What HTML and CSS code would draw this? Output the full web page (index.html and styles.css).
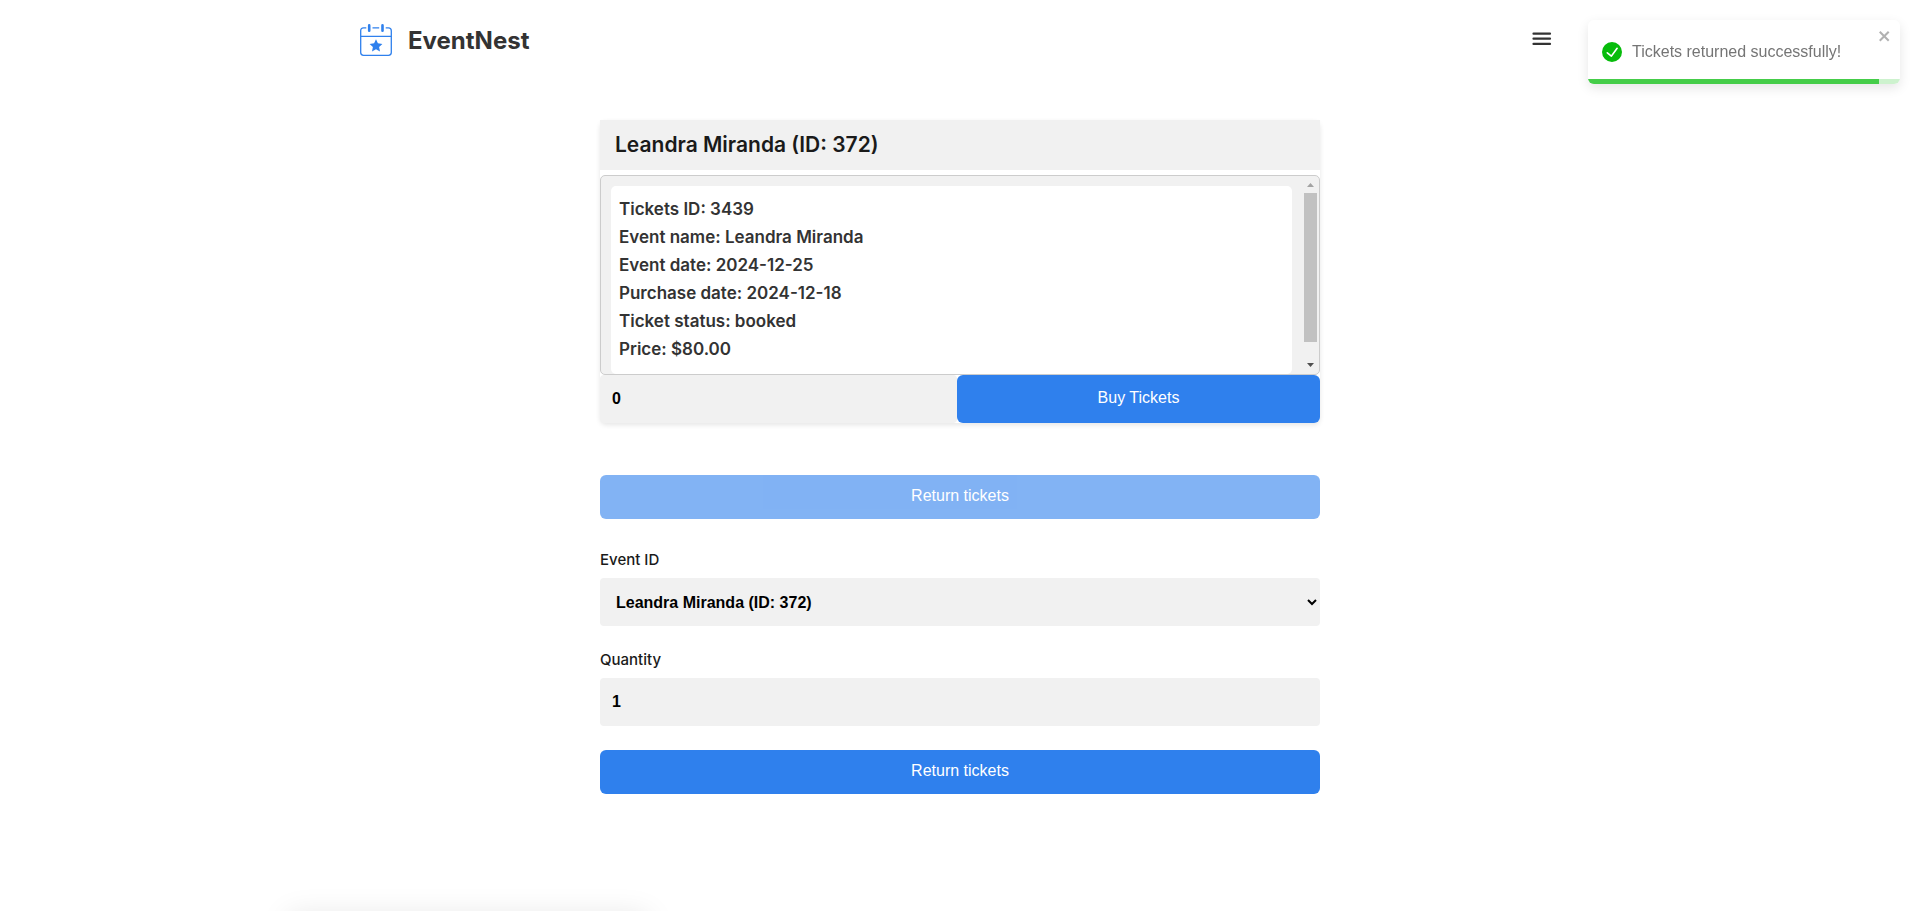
FILE: index.html
```html
<!DOCTYPE html>
<html lang="en">
<head>
<meta charset="utf-8">
<meta name="viewport" content="width=device-width, initial-scale=1">
<title>EventNest</title>
<link rel="stylesheet" href="styles.css">
</head>
<body>
<header class="header">
  <a class="brand" href="#">
    <svg class="brand-icon" viewBox="0 0 32 32" fill="none" stroke="#2f80ed" aria-hidden="true">
      <path d="M6.300 3.900H3.500Q.7 3.900.7 6.700V28.500Q.7 31.300 3.500 31.300H28.500Q31.300 31.300 31.300 28.500V6.700Q31.300 3.900 28.500 3.900H25.700M12.500 3.900H19.200M1 12.400H31" stroke-width="1.300"/>
      <path d="M9.200 1.400V6.700M22.500 1.400V6.700" stroke-width="2.600" stroke-linecap="round"/>
      <path d="M16 15.300l1.900 4 4.500.6-3.300 3 .9 4.500-4-2.200-4 2.200.9-4.500-3.300-3 4.500-.6z" fill="#2f80ed" stroke="none"/>
    </svg>
    <span class="brand-name">EventNest</span>
  </a>
  <button class="menu-button" type="button" aria-label="Menu">
    <svg class="menu-icon" viewBox="0 0 20 16" stroke="#333" stroke-width="2.200" stroke-linecap="round" aria-hidden="true">
      <path d="M1.500 1.700h16.500M1.500 6.700h16.500M1.500 11.900h16.500"/>
    </svg>
  </button>
</header>

<main class="main">
  <section class="card">
    <h2 class="card-title">Leandra Miranda (ID: 372)</h2>
    <div class="ticket-panel">
      <div class="ticket-list">
        <div class="ticket">
          <p>Tickets ID: 3439</p>
          <p>Event name: Leandra Miranda</p>
          <p>Event date: 2024-12-25</p>
          <p>Purchase date: 2024-12-18</p>
          <p>Ticket status: booked</p>
          <p>Price: $80.00</p>
        </div>
      </div>
      <div class="scrollbar" aria-hidden="true">
        <svg class="scrollbar-arrow" viewBox="0 0 17 17" fill="#a3a3a3"><path d="M5 11h7L8.500 7z"/></svg>
        <div class="scrollbar-track"><div class="scrollbar-thumb" style="height: 91%"></div></div>
        <svg class="scrollbar-arrow" viewBox="0 0 17 17" fill="#505050"><path d="M5 6h7l-3.500 4z"/></svg>
      </div>
    </div>
    <form class="buy-row">
      <input class="field" type="text" inputmode="numeric" value="0" aria-label="Number of tickets">
      <button class="button" type="button">Buy Tickets</button>
    </form>
  </section>

  <button class="button button-muted" type="button">Return tickets</button>

  <form class="return-form">
    <div class="form-group">
      <label class="label" for="event">Event ID</label>
      <select class="field" id="event">
        <option>Leandra Miranda (ID: 372)</option>
      </select>
    </div>
    <div class="form-group">
      <label class="label" for="quantity">Quantity</label>
      <input class="field" id="quantity" type="text" inputmode="numeric" value="1">
    </div>
    <button class="button" type="button">Return tickets</button>
  </form>
</main>

<div class="toast" role="alert">
  <svg class="toast-icon" viewBox="0 0 24 24" fill="#07bc0c" aria-hidden="true">
    <path d="M12 0a12 12 0 1012 12A12.014 12.014 0 0012 0zm6.927 8.200l-6.845 9.289a1.011 1.011 0 01-1.430.188l-4.888-3.908a1 1 0 111.250-1.562l4.076 3.261 6.227-8.451a1 1 0 111.610 1.183z"/>
  </svg>
  <span class="toast-text">Tickets returned successfully!</span>
  <button class="toast-close" type="button" aria-label="Close">
    <svg viewBox="0 0 14 16" aria-hidden="true">
      <path fill-rule="evenodd" d="M7.710 8.230l3.750 3.750-1.480 1.480-3.750-3.750-3.750 3.750L1 11.980l3.750-3.750L1 4.480 2.480 3l3.750 3.750L9.980 3l1.480 1.480-3.750 3.750z"/>
    </svg>
  </button>
  <div class="toast-progress"><div class="toast-progress-bar" style="width: 93.3%"></div></div>
</div>

<div class="drawer"></div>
</body>
</html>
```
FILE: styles.css
```css
* {
  box-sizing: border-box;
}

body {
  margin: 0;
  background: #fff;
  color: #1a1a1a;
  font-family: Inter, sans-serif;
}

button,
input,
select {
  font-family: "Liberation Sans", Arial, sans-serif;
}

.header {
  display: flex;
  align-items: center;
  justify-content: space-between;
  max-width: 1200px;
  height: 80px;
  margin: 0 auto;
}

.brand {
  display: flex;
  align-items: center;
  gap: 16px;
  color: #333;
  text-decoration: none;
}

.brand-icon {
  width: 32px;
  height: 32px;
}

.brand-name {
  font-size: 24px;
  font-weight: 700;
}

.menu-button {
  display: flex;
  padding: 8px;
  border: 0;
  background: none;
  cursor: pointer;
}

.menu-icon {
  width: 20px;
  height: 16px;
}

.main {
  max-width: 720px;
  margin: 40px auto;
}

.card {
  margin-bottom: 52px;
  border-radius: 6px;
  box-shadow: 0 2px 5px rgba(0, 0, 0, 0.1);
}

.card-title {
  margin: 0 0 5px;
  padding: 10px 15px;
  background: #f1f1f1;
  font-size: 21px;
  font-weight: 600;
  line-height: 30px;
}

.ticket-panel {
  display: flex;
  height: 200px;
  overflow: hidden;
  border: 1px solid #ccc;
  border-radius: 5px;
  background: #f1f1f1;
}

.ticket-list {
  flex: 1;
  padding: 10px;
  overflow-y: auto;
  scrollbar-width: none;
}

.scrollbar {
  display: flex;
  flex-direction: column;
  width: 17px;
}

.scrollbar-arrow {
  width: 17px;
  height: 17px;
}

.scrollbar-track {
  flex: 1;
  padding: 0 2px;
}

.scrollbar-thumb {
  background: #c1c1c1;
}

.ticket {
  margin-bottom: 10px;
  padding: 9px 8px 11px;
  border-radius: 5px;
  background: #fff;
  color: #333;
  font-size: 17px;
  font-weight: 600;
  line-height: 28px;
}

.ticket p {
  margin: 0;
}

.buy-row {
  display: grid;
  grid-template-columns: 357fr 363fr;
}

.field {
  width: 100%;
  height: 48px;
  padding: 0 12px;
  border: 0;
  border-radius: 4px;
  background: #f1f1f1;
  color: #000;
  font-size: 16px;
  font-weight: 700;
}

.button {
  width: 100%;
  min-height: 44px;
  padding: 0 12px 2px;
  border: 0;
  border-radius: 6px;
  background: #2f80ed;
  color: #fff;
  font-size: 16px;
  cursor: pointer;
}

.button-muted {
  opacity: 0.6;
}

.return-form {
  display: grid;
  gap: 24px;
  margin-top: 31px;
}

.form-group {
  display: grid;
  gap: 8px;
}

.label {
  font-size: 15px;
  font-weight: 500;
  line-height: 20px;
}

.toast {
  position: fixed;
  top: 20px;
  right: 20px;
  display: flex;
  align-items: center;
  gap: 10px;
  width: 312px;
  height: 64px;
  padding: 0 14px;
  overflow: hidden;
  border-radius: 6px;
  background: #fff;
  box-shadow: 0 4px 12px rgba(0, 0, 0, 0.1);
  color: #757575;
  font-family: "Liberation Sans", Arial, sans-serif;
  font-size: 16px;
}

.toast-icon {
  width: 20px;
  height: 20px;
}

.toast-close {
  position: absolute;
  top: 8px;
  right: 8px;
  display: flex;
  padding: 0;
  border: 0;
  background: none;
  opacity: 0.3;
  cursor: pointer;
}

.toast-close svg {
  width: 14px;
  height: 16px;
}

.toast-progress {
  position: absolute;
  right: 0;
  bottom: 0;
  left: 0;
  height: 5px;
  background: #cdf2ce;
}

.toast-progress-bar {
  height: 100%;
  background: #45cd49;
}

.drawer {
  position: fixed;
  top: 100%;
  left: 15%;
  width: 360px;
  height: 80px;
  box-shadow: 0 4px 30px rgba(0, 0, 0, 0.1);
}
```
